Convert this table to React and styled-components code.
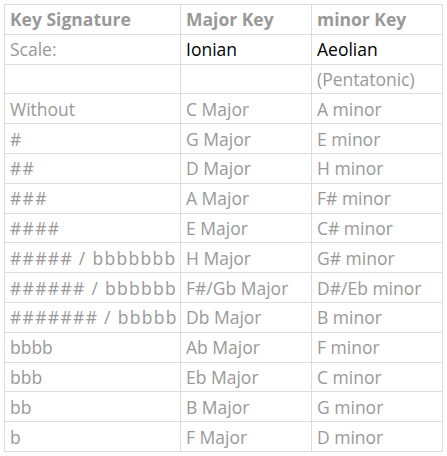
import React from "react";
import styled, { createGlobalStyle } from "styled-components";

const Global = createGlobalStyle`
  html, body { margin: 0; padding: 0; background: #fff; }
  body { padding: 4px; }
`;

const Table = styled.table`
  border-collapse: collapse;
  width: 439px;
  font-family: "Open Sans", "Noto Sans", sans-serif;
  font-size: 17.5px;
  color: #999;
  table-layout: fixed;
`;

const Col = styled.col`
  width: ${(p) => p.$w}px;
`;

const Th = styled.th`
  border: 1px solid #ddd;
  text-align: left;
  font-weight: 700;
  padding: 0 5px;
  height: 28.8px;
  line-height: 22px;
  white-space: nowrap;
  overflow: hidden;
`;

const Td = styled.td`
  border: 1px solid #ddd;
  padding: 0 5px;
  height: 28.8px;
  line-height: 22px;
  white-space: nowrap;
  overflow: hidden;
  letter-spacing: ${(p) => (p.$hash ? "1.3px" : "normal")};
  color: ${(p) => (p.$dark ? "#000" : "#999")};
`;

const rows = [
  ["Without", "C Major", "A minor"],
  ["#", "G Major", "E minor"],
  ["##", "D Major", "H minor"],
  ["###", "A Major", "F# minor"],
  ["####", "E Major", "C# minor"],
  ["##### / bbbbbbb", "H Major", "G# minor"],
  ["###### / bbbbbb", "F#/Gb Major", "D#/Eb minor"],
  ["####### / bbbbb", "Db Major", "B minor"],
  ["bbbb", "Ab Major", "F minor"],
  ["bbb", "Eb Major", "C minor"],
  ["bb", "B Major", "G minor"],
  ["b", "F Major", "D minor"],
];

export default function App() {
  return (
    <>
      <Global />
      <Table>
        <colgroup>
          <Col $w={176} />
          <Col $w={131} />
          <Col $w={131} />
        </colgroup>
        <thead>
          <tr>
            <Th>Key Signature</Th>
            <Th>Major Key</Th>
            <Th>minor Key</Th>
          </tr>
        </thead>
        <tbody>
          <tr>
            <Td>Scale:</Td>
            <Td $dark>Ionian</Td>
            <Td $dark>Aeolian</Td>
          </tr>
          <tr>
            <Td></Td>
            <Td></Td>
            <Td>(Pentatonic)</Td>
          </tr>
          {rows.map((r, i) => (
            <tr key={i}>
              <Td $hash={r[0].includes("#")}>{r[0]}</Td>
              <Td>{r[1]}</Td>
              <Td>{r[2]}</Td>
            </tr>
          ))}
        </tbody>
      </Table>
    </>
  );
}
